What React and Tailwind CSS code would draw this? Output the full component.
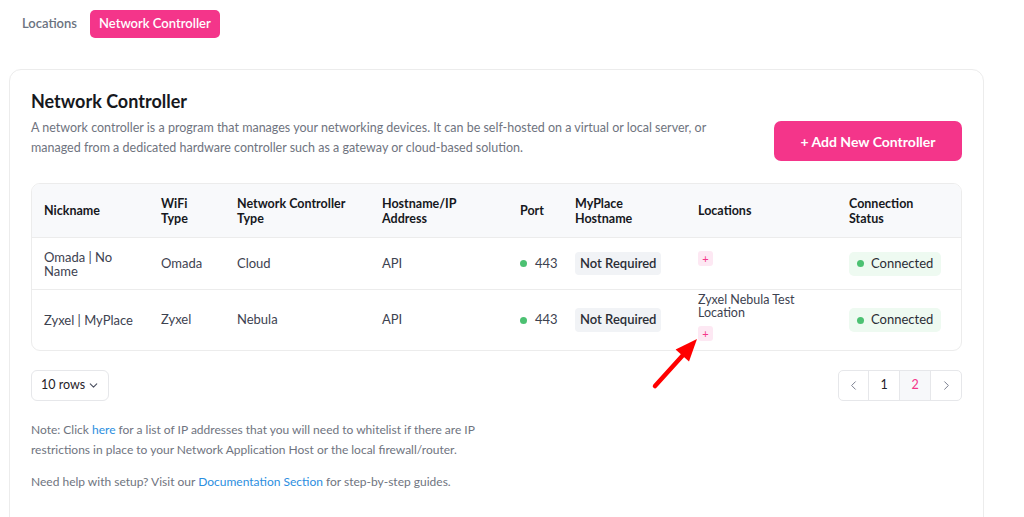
import { ChevronDown, ChevronLeft, ChevronRight } from 'lucide-react'

const PINK = 'bg-[#f4358a]'

const cols = 'grid grid-cols-[117px_76px_145px_138px_55px_123px_151px_1fr] pl-3'

function Dot({ className = '' }) {
  return <span className={`inline-block w-[7px] h-[7px] rounded-full bg-[#4cc172] ${className}`} />
}

function PlusBadge() {
  return (
    <span className="inline-flex items-center justify-center w-[15px] h-[15px] rounded-[3px] bg-[#fde8f3] text-[#f4358a] text-[11px] leading-none">
      +
    </span>
  )
}

function Row({ nickname, wifi, type, host, port, location, tall }) {
  return (
    <div className={`${cols} items-center border-b border-[#ececec] last:border-b-0 text-[13px] text-[#3d4250] ${tall ? 'h-[60px]' : 'h-[52px]'}`}>
      <div className="leading-[14px]">{nickname}</div>
      <div>{wifi}</div>
      <div>{type}</div>
      <div>{host}</div>
      <div className="flex items-center gap-[8px]">
        <Dot />
        <span>{port}</span>
      </div>
      <div>
        <span className="inline-block px-[5px] py-[2px] rounded-[4px] bg-[#f1f3f6] font-semibold text-[#2a2d35]">Not Required</span>
      </div>
      <div className="flex flex-col items-start">
        {location && <div className="leading-[13px] text-[12.5px] mb-[5px] -mt-[3px]">{location}</div>}
        <div className={location ? '' : '-mt-[10px]'}>
          <PlusBadge />
        </div>
      </div>
      <div>
        <span className="inline-flex items-center gap-[7px] px-[8px] h-[24px] rounded-[5px] bg-[#eefaf1] text-[#2a2d35]">
          <Dot />
          Connected
        </span>
      </div>
    </div>
  )
}

export default function App() {
  return (
    <div className="min-h-screen bg-white font-['Lato',sans-serif] text-[#1f2128]">
      {/* Tabs */}
      <div className="flex items-center gap-[13px] pl-[22px] pt-[10px]">
        <span className="text-[13px] font-semibold text-[#6b7280]">Locations</span>
        <span className={`${PINK} text-white text-[13px] font-semibold h-[28px] px-[9px] flex items-center rounded-[5px]`}>
          Network Controller
        </span>
      </div>

      {/* Card */}
      <div className="relative mx-[9px] mr-[40px] mt-[31px] rounded-[12px] border border-[#ececec] px-[21px] pt-[19px] pb-10">
        <div className="flex justify-between">
          <div>
            <h1 className="text-[18px] font-bold leading-[24px] text-[#16181d]">Network Controller</h1>
            <p className="mt-[5px] text-[12.5px] leading-[20px] text-[#6f7480] max-w-[700px]">
              A network controller is a program that manages your networking devices. It can be self-hosted on a virtual or local server, or
              <br />
              managed from a dedicated hardware controller such as a gateway or cloud-based solution.
            </p>
          </div>
          <button className={`${PINK} self-start mt-[32px] w-[188px] h-[40px] rounded-[7px] text-white text-[14px] font-bold`}>
            + Add New Controller
          </button>
        </div>

        {/* Table */}
        <div className="mt-[22px] rounded-[9px] border border-[#ececec] overflow-hidden">
          <div className={`${cols} items-center h-[54px] bg-[#f8f9fb] border-b border-[#ececec] text-[12.5px] font-bold leading-[15px] text-[#16181d]`}>
            <div>Nickname</div>
            <div>WiFi<br />Type</div>
            <div>Network Controller<br />Type</div>
            <div>Hostname/IP<br />Address</div>
            <div>Port</div>
            <div>MyPlace<br />Hostname</div>
            <div>Locations</div>
            <div>Connection<br />Status</div>
          </div>
          <Row nickname={<>Omada | No<br />Name</>} wifi="Omada" type="Cloud" host="API" port="443" />
          <Row
            nickname="Zyxel | MyPlace"
            wifi="Zyxel"
            type="Nebula"
            host="API"
            port="443"
            location={<>Zyxel Nebula Test<br />Location</>}
            tall
          />
        </div>

        {/* Controls */}
        <div className="mt-[19px] flex items-center justify-between">
          <button className="h-[31px] w-[78px] rounded-[6px] border border-[#e6e7ea] flex items-center justify-between pl-[9px] pr-[8px] text-[12.5px] text-[#1f2128] whitespace-nowrap">
            <span>10 rows</span>
            <ChevronDown size={13} strokeWidth={2} className="text-[#4b5060] shrink-0" />
          </button>
          <div className="flex h-[31px] rounded-[5px] border border-[#e6e7ea] overflow-hidden text-[12.5px]">
            <div className="w-[30px] flex items-center justify-center border-r border-[#e6e7ea] text-[#7b8090]">
              <ChevronLeft size={15} strokeWidth={1.6} />
            </div>
            <div className="w-[31px] flex items-center justify-center border-r border-[#e6e7ea] text-[#1f2128]">1</div>
            <div className="w-[31px] flex items-center justify-center border-r border-[#e6e7ea] bg-[#f7f8fa] text-[#f4358a]">2</div>
            <div className="w-[30px] flex items-center justify-center text-[#7b8090]">
              <ChevronRight size={15} strokeWidth={1.6} />
            </div>
          </div>
        </div>

        {/* Notes */}
        <p className="mt-[19px] text-[12px] leading-[20px] text-[#6f7480]">
          Note: Click <span className="text-[#2b8ee0]">here</span> for a list of IP addresses that you will need to whitelist if there are IP
          <br />
          restrictions in place to your Network Application Host or the local firewall/router.
        </p>
        <p className="mt-[12px] text-[12px] leading-[20px] text-[#6f7480]">
          Need help with setup? Visit our <span className="text-[#2b8ee0]">Documentation Section</span> for step-by-step guides.
        </p>

        {/* Red annotation arrow */}
        <svg className="absolute left-[640px] top-[264px] pointer-events-none" width="64" height="64" viewBox="0 0 64 64">
          <line x1="5" y1="52" x2="34" y2="20" stroke="#ff0000" strokeWidth="4.5" strokeLinecap="round" />
          <polygon points="47,5 25.6,15.4 39,27.4" fill="#ff0000" />
        </svg>
      </div>
    </div>
  )
}
